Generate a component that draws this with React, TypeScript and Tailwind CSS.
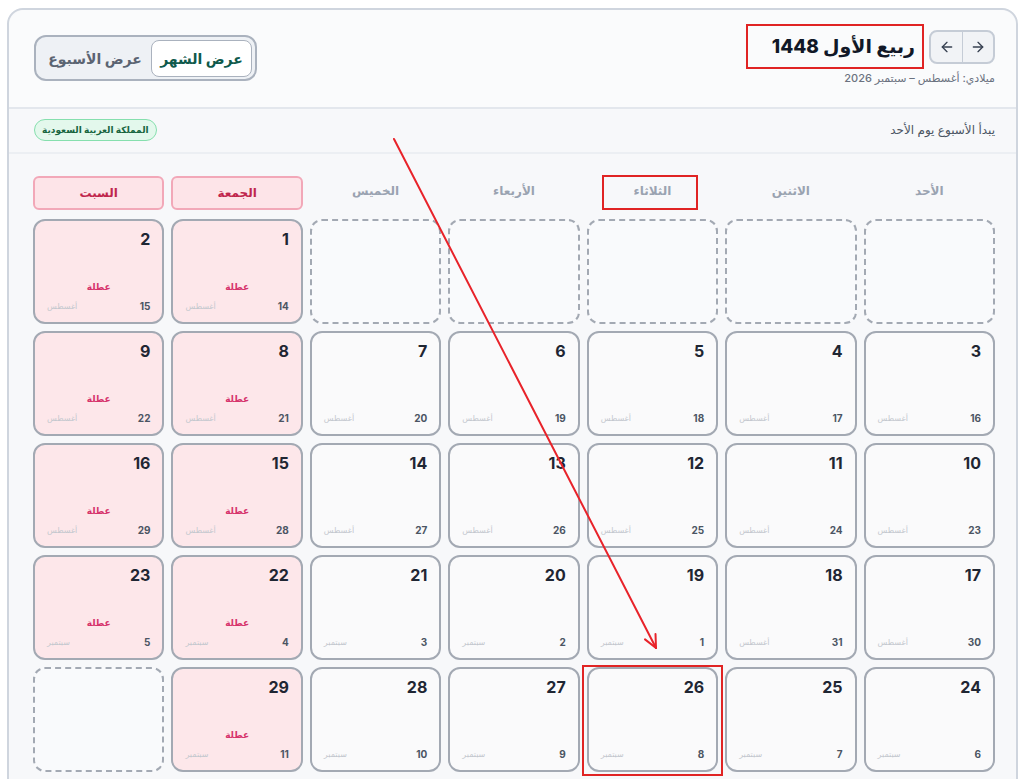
import React from "react";
import { ArrowLeft, ArrowRight } from "lucide-react";

const weekdays = [
  { label: "الأحد", holiday: false },
  { label: "الاثنين", holiday: false },
  { label: "الثلاثاء", holiday: false },
  { label: "الأربعاء", holiday: false },
  { label: "الخميس", holiday: false },
  { label: "الجمعة", holiday: true },
  { label: "السبت", holiday: true },
];

type Cell = { day: number; greg: number; month: string; holiday: boolean } | null;

const buildCells = (): Cell[] => {
  const cells: Cell[] = [];
  // month starts on Friday (index 5 in a week that begins on Sunday)
  for (let i = 0; i < 5; i++) cells.push(null);
  for (let d = 1; d <= 29; d++) {
    const g = d + 13; // 1 Rabi al-Awwal = 14 Aug
    const greg = g > 31 ? g - 31 : g;
    const month = g > 31 ? "سبتمبر" : "أغسطس";
    const col = cells.length % 7;
    cells.push({ day: d, greg, month, holiday: col === 5 || col === 6 });
  }
  while (cells.length < 42) cells.push(null);
  return cells;
};

const cells = buildCells();

const DayCell = ({ cell }: { cell: Cell }) => {
  if (!cell) {
    return (
      <div className="h-[105px] rounded-xl border-2 border-dashed border-[#a3a9b3] bg-[#f9fafc]" />
    );
  }
  return (
    <div
      className={`flex h-[105px] flex-col rounded-xl border-2 border-[#a3a9b3] px-3 pb-[8px] pt-[6px] ${
        cell.holiday ? "bg-[#fde7ea]" : "bg-[#fafafb]"
      }`}
    >
      <div className="text-[16px] font-bold leading-6 text-[#1f2633]">{cell.day}</div>
      <div className="flex flex-1 items-center justify-center pt-[24px]">
        {cell.holiday && (
          <span className="text-[9px] font-bold text-[#d6336c]">عطلة</span>
        )}
      </div>
      <div className="flex items-center justify-between">
        <span className="text-[10px] font-bold text-[#4b5563]">{cell.greg}</span>
        <span className="text-[8px] text-[#c3c7ce]">{cell.month}</span>
      </div>
    </div>
  );
};

export default function App() {
  return (
    <div
      className="relative min-h-screen overflow-hidden bg-white pt-[8px]"
      style={{ fontFamily: "Inter, 'DejaVu Sans', sans-serif" }}
    >
      <div
        dir="rtl"
        className="ml-[7px] w-[1011px] rounded-2xl border-2 border-[#cfd5de] bg-[#f7f8fa]"
      >
        {/* header */}
        <div className="flex items-center justify-between rounded-t-2xl border-b-2 border-[#e3e7ed] bg-[#fafbfc] py-5 pl-[25px] pr-[21px]">
          <div className="flex flex-col gap-[6px]">
            <div className="flex items-center gap-[14px]">
              <div className="flex h-[34px] overflow-hidden rounded-lg border-2 border-[#c5ccd6] bg-[#f1f3f6]">
                <button type="button" className="flex w-[31px] items-center justify-center border-l border-[#c5ccd6] text-[#374151]">
                  <ArrowRight className="h-4 w-4" />
                </button>
                <button type="button" className="flex w-[31px] items-center justify-center text-[#374151]">
                  <ArrowLeft className="h-4 w-4" />
                </button>
              </div>
              <h1 className="text-[19px] font-extrabold leading-7 text-[#111827]">ربيع الأول 1448</h1>
            </div>
            <div className="text-[11px] font-medium text-[#6b7280]">ميلادي: أغسطس – سبتمبر 2026</div>
          </div>

          <div className="flex h-[46px] items-center gap-0 rounded-xl border-2 border-[#aab2be] bg-[#eef1f5] p-[3px]">
            <button type="button" className="h-[37px] w-[101px] rounded-lg border border-[#aab2be] bg-white text-[14px] font-bold text-[#0f5a4c]">
              عرض الشهر
            </button>
            <button type="button" className="h-[37px] w-[112px] text-[14px] font-semibold text-[#5b6472]">
              عرض الأسبوع
            </button>
          </div>
        </div>

        {/* strip */}
        <div className="flex h-[45px] items-center justify-between border-b-2 border-[#eceff3] pl-[25px] pr-[21px]">
          <span className="text-[12px] text-[#4b5563]">يبدأ الأسبوع يوم الأحد</span>
          <span className="rounded-full border border-[#86dfae] bg-[#e3f8ec] px-[7px] py-[3px] text-[9px] font-bold text-[#17653f]">
            المملكة العربية السعودية
          </span>
        </div>

        {/* calendar */}
        <div className="pl-[24px] pr-[21px] pt-[22px]">
          <div className="grid grid-cols-7 gap-x-[7px]">
            {weekdays.map((w) => (
              <div
                key={w.label}
                className={`flex h-[34px] items-center justify-center rounded-md text-[12px] font-semibold ${
                  w.holiday
                    ? "border-2 border-[#f2a8b8] bg-[#fde4e8] font-bold text-[#c0264d]"
                    : "pb-1 text-[#9aa3b1]"
                }`}
              >
                {w.label}
              </div>
            ))}
          </div>
          <div className="mt-[9px] grid grid-cols-7 gap-[7px] pb-6">
            {cells.map((c, i) => (
              <DayCell key={i} cell={c} />
            ))}
          </div>
        </div>
      </div>

      {/* annotations */}
      <div className="pointer-events-none absolute left-[746px] top-[24px] h-[45px] w-[178px] border-2 border-[#e02424]" />
      <div className="pointer-events-none absolute left-[602px] top-[175px] h-[35px] w-[96px] border-2 border-[#e02424]" />
      <div className="pointer-events-none absolute left-[582px] top-[665px] h-[111px] w-[141px] border-2 border-[#e02424]" />
      <svg className="pointer-events-none absolute left-0 top-0" width="1024" height="779">
        <g stroke="#e8232a" strokeWidth="2" strokeLinecap="round" fill="none">
          <line x1="394" y1="139" x2="656" y2="648" />
          <line x1="656" y1="648" x2="655.5" y2="634" />
          <line x1="656" y1="648" x2="645" y2="639.4" />
        </g>
      </svg>
    </div>
  );
}
